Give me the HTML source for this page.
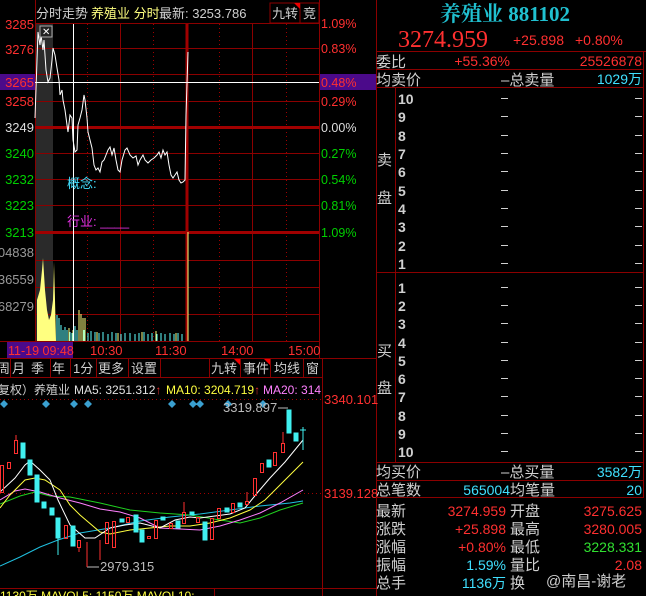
<!DOCTYPE html>
<html><head><meta charset="utf-8"><style>
html,body{margin:0;padding:0;background:#000;width:646px;height:596px;overflow:hidden}
svg{display:block}
text{font-family:"Liberation Sans","Noto Sans CJK SC",sans-serif}
.cn{font-family:"Liberation Sans","WenQuanYi Zen Hei","Noto Sans CJK SC",sans-serif}
</style></head><body>
<svg width="646" height="596" viewBox="0 0 646 596" xmlns="http://www.w3.org/2000/svg">
<rect x="35" y="24" width="18" height="317" fill="#2a2a2a"/>
<g stroke="#8b0000" stroke-width="1">
<line x1="35" y1="23.5" x2="319" y2="23.5"/>
<line x1="35" y1="48.5" x2="319" y2="48.5"/>
<line x1="35" y1="74.5" x2="319" y2="74.5"/>
<line x1="35" y1="101.5" x2="319" y2="101.5"/>
<line x1="35" y1="153.5" x2="319" y2="153.5"/>
<line x1="35" y1="179.5" x2="319" y2="179.5"/>
<line x1="35" y1="205.5" x2="319" y2="205.5"/>
<line x1="35" y1="260.5" x2="319" y2="260.5"/>
<line x1="35" y1="287.5" x2="319" y2="287.5"/>
<line x1="35" y1="314.5" x2="319" y2="314.5"/>
<line x1="0" y1="341.5" x2="319" y2="341.5"/>
<line x1="35.5" y1="0" x2="35.5" y2="341"/>
<line x1="120.5" y1="24" x2="120.5" y2="341"/>
<line x1="252.5" y1="24" x2="252.5" y2="341"/>
<line x1="319.5" y1="0" x2="319.5" y2="358"/>
<line x1="0" y1="358.5" x2="376" y2="358.5"/>
<line x1="376.5" y1="0" x2="376.5" y2="596"/>
</g>
<g stroke="#a00000" stroke-width="3">
<line x1="35" y1="127.5" x2="319" y2="127.5"/>
<line x1="35" y1="232.5" x2="319" y2="232.5"/>
<line x1="187" y1="24" x2="187" y2="341"/>
</g>
<g stroke="#a00000" stroke-width="1" stroke-dasharray="1,3">
<line x1="87.5" y1="24" x2="87.5" y2="341"/>
<line x1="153.5" y1="24" x2="153.5" y2="341"/>
<line x1="219.5" y1="24" x2="219.5" y2="341"/>
<line x1="286.5" y1="24" x2="286.5" y2="341"/>
</g>
<text x="36" y="18" font-size="13" fill="#d0d0d0" class="cn">分时走势</text>
<text x="91" y="18" font-size="13" fill="#ffff80" class="cn">养殖业 分时</text>
<text x="159" y="18" font-size="13" fill="#d0d0d0" class="cn">最新: 3253.786</text>
<rect x="270" y="3" width="30" height="20" fill="none" stroke="#8b0000"/>
<rect x="300" y="3" width="19" height="20" fill="none" stroke="#8b0000"/>
<polygon points="294,3 300,3 300,9" fill="#e00"/>
<text x="272" y="18" font-size="13" fill="#d0d0d0" class="cn">九转</text>
<text x="303" y="18" font-size="13" fill="#d0d0d0" class="cn">竞</text>
<g font-size="13" text-anchor="end">
<text x="34" y="29" fill="#ff3030">3285</text>
<text x="34" y="54" fill="#ff3030">3276</text>
<text x="34" y="106" fill="#ff3030">3258</text>
<text x="34" y="132" fill="#ddd">3249</text>
<text x="34" y="158" fill="#00d000">3240</text>
<text x="34" y="184" fill="#00d000">3232</text>
<text x="34" y="210" fill="#00d000">3223</text>
<text x="34" y="237" fill="#00d000">3213</text>
<text x="34" y="257" fill="#999">04838</text>
<text x="34" y="284" fill="#999">36559</text>
<text x="34" y="311" fill="#999">68279</text>
</g>
<rect x="0" y="74" width="35" height="16" fill="#4b0a8a"/>
<text x="34" y="87" font-size="13" text-anchor="end" fill="#ff3030">3265</text>
<g font-size="12.5">
<text x="321" y="28" fill="#ff3030">1.09%</text>
<text x="321" y="53" fill="#ff3030">0.83%</text>
<text x="321" y="106" fill="#ff3030">0.29%</text>
<text x="321" y="132" fill="#ddd">0.00%</text>
<text x="321" y="158" fill="#00d000">0.27%</text>
<text x="321" y="184" fill="#00d000">0.54%</text>
<text x="321" y="210" fill="#00d000">0.81%</text>
<text x="321" y="237" fill="#00d000">1.09%</text>
</g>
<rect x="320" y="74" width="56" height="16" fill="#4b0a8a"/>
<text x="321" y="87" font-size="12.5" fill="#ff3030">0.48%</text>
<path d="M37,341 L37,300 L40,290 L42,270 L43,258 L45,290 L47,310 L49,320 L51,315 L53,300 L54,262 L55,300 L56,341 Z" fill="#ffff80"/>
<g stroke="#60ffff" stroke-width="1">
<path d="M57,341V315M59,341V318M61,341V325M63,341V330M65,341V327M67,341V330M70,341V332M72,341V333M75,341V326M77,341V330M81,341V329M84,341V330M88,341V333M91,341V331M95,341V332M99,341V333M103,341V332M108,341V334M112,341V332M116,341V333M121,341V334M125,341V333M130,341V333M135,341V334M139,341V333M144,341V332M148,341V334M152,341V333M157,341V334M161,341V333M165,341V334M170,341V333M174,341V334M178,341V333M182,341V334"/>
</g>
<g stroke="#ffff80" stroke-width="1">
<path d="M69,341V328M73,341V330M79,341V310M81,341V314M83,341V318M85,341V318M97,341V332M118,341V333M142,341V332M156,341V331M176,341V333M188,341V232"/>
</g>
<polyline fill="none" stroke="#fff" stroke-width="1" points="35,118 37,60 38,32 40,45 41,35 43,50 44,40 46,70 48,82 50,78 52,60 53,48 55,55 57,68 59,80 60,95 62,90 63,100 65,110 67,125 68,132 70,115 72,118 73,140 75,152 77,150 78,125 80,118 82,110 84,95 85,100 87,118 88,132 90,140 92,148 94,165 96,170 98,168 100,172 102,162 104,160 106,155 108,150 110,147 112,155 114,148 116,160 118,170 120,172 122,160 125,150 127,148 130,155 133,158 136,156 138,165 140,160 143,155 145,160 148,163 151,160 154,158 157,155 159,152 161,158 163,150 165,155 167,152 169,165 171,175 173,178 175,175 177,172 179,180 181,183 183,182 185,180 186,115 188,52"/>
<line x1="35" y1="82.5" x2="319" y2="82.5" stroke="#fff"/>
<line x1="73.5" y1="24" x2="73.5" y2="341" stroke="#fff"/>
<rect x="40" y="26" width="12" height="11" fill="#222" stroke="#aaa"/>
<text x="42" y="35" font-size="10" fill="#fff">✕</text>
<text x="67" y="188" font-size="13" fill="#40e0ff" class="cn">概念:</text>
<text x="67" y="226" font-size="13" fill="#e030e0" class="cn">行业: ____</text>
<rect x="7" y="342" width="66" height="16" fill="#4b0a8a"/>
<text x="8" y="355" font-size="12.5" fill="#ff3030">11-19 09:48</text>
<g font-size="13" fill="#ff3030">
<text x="90" y="355">10:30</text><text x="155" y="355">11:30</text>
<text x="221" y="355">14:00</text><text x="288" y="355">15:00</text>
</g>
<g stroke="#8b0000"><line x1="0" y1="377.5" x2="322" y2="377.5"/>
<path d="M10.5,359V377M50.5,359V377M70.5,359V377M96.5,359V377M128.5,359V377M160.5,359V377M209.5,359V377M240.5,359V377M270.5,359V377M303.5,359V377"/>
<line x1="322.5" y1="359" x2="322.5" y2="596"/>
<line x1="0" y1="588.5" x2="376" y2="588.5"/>
<line x1="214.5" y1="588" x2="214.5" y2="596"/></g>
<polygon points="234,359 240,359 240,365" fill="#e00"/>
<polygon points="264,359 270,359 270,365" fill="#e00"/>
<g font-size="13" fill="#d0d0d0" class="cn">
<text x="-3" y="373">周</text><text x="12" y="373">月</text><text x="31" y="373">季</text><text x="52" y="373">年</text>
<text x="73" y="373">1分</text><text x="98" y="373">更多</text><text x="131" y="373">设置</text>
<text x="211" y="373">九转</text><text x="243" y="373">事件</text><text x="274" y="373">均线</text><text x="306" y="373">窗</text>
</g>
<text x="-2" y="394" font-size="12" class="cn" fill="#d0d0d0">复权）养殖业</text>
<text x="74" y="394" font-size="12" fill="#e0e0e0">MA5: 3251.312<tspan fill="#e03030">↑</tspan></text>
<text x="166" y="394" font-size="12" fill="#ffff40">MA10: 3204.719<tspan fill="#e03030">↑</tspan></text>
<text x="263" y="394" font-size="12" fill="#ff80ff">MA20: 314</text>
<g stroke="#a00000" stroke-dasharray="1,3"><line x1="0" y1="399.5" x2="322" y2="399.5"/><line x1="0" y1="493.5" x2="322" y2="493.5"/></g>
<text x="324" y="404" font-size="13" fill="#ff3030">3340.101</text>
<text x="324" y="498" font-size="13" fill="#ff3030">3139.128</text>
<g fill="#3aa0d0">
<path d="M4,400l4,4l-4,4l-4,-4zM46,400l4,4l-4,4l-4,-4zM74,400l4,4l-4,4l-4,-4zM88,400l4,4l-4,4l-4,-4zM172,400l4,4l-4,4l-4,-4zM193,400l4,4l-4,4l-4,-4zM200,400l4,4l-4,4l-4,-4zM228,400l4,4l-4,4l-4,-4zM263,400l4,4l-4,4l-4,-4z"/>
</g>
<text x="223" y="412" font-size="13" fill="#bbb">3319.897</text>
<line x1="278" y1="408" x2="288" y2="408" stroke="#bbb"/>
<text x="100" y="571" font-size="13" fill="#bbb">2979.315</text>
<line x1="87" y1="567" x2="99" y2="567" stroke="#bbb"/>
<polyline fill="none" stroke="#20c0e0" points="0,566 20,557 40,547 58,540 80,533 110,528 140,521 170,517 200,514 230,510 260,506 290,503 303,501"/>
<polyline fill="none" stroke="#20d020" points="0,504 20,496 35,492 50,496 70,497 100,503 130,510 160,513 190,515 220,520 240,523 260,518 280,510 303,503"/>
<polyline fill="none" stroke="#ff80ff" points="0,500 15,491 25,489 40,492 60,498 80,503 100,509 120,512 140,518 160,528 180,529 200,530 220,526 240,520 260,513 280,503 303,490"/>
<polyline fill="none" stroke="#ffff40" points="0,508 10,495 25,480 35,478 45,480 60,490 70,505 80,515 100,532 110,534 130,530 150,528 170,526 190,526 210,523 230,518 250,510 265,500 280,485 303,462"/>
<polyline fill="none" stroke="#fff" points="0,492 15,478 25,465 30,461 40,470 50,480 58,500 70,525 85,538 95,538 110,528 125,525 140,523 160,528 175,520 190,517 200,518 215,516 230,514 245,508 258,492 270,478 285,462 303,440"/>
<g fill="#40f0f0" stroke="#40f0f0">
<rect x="21" y="443" width="4" height="15"/><rect x="28" y="460" width="4" height="15"/><rect x="35" y="475" width="4" height="27"/>
<rect x="42" y="502" width="4" height="6"/><rect x="50" y="508" width="4" height="7"/><rect x="56" y="518" width="4" height="20"/><line x1="58" y1="538" x2="58" y2="555"/>
<rect x="71" y="526" width="4" height="20"/><rect x="120" y="519" width="4" height="3"/><rect x="134" y="515" width="4" height="17"/>
<rect x="140" y="530" width="4" height="12"/><rect x="161" y="517" width="4" height="3"/><rect x="176" y="521" width="4" height="7"/>
<rect x="190" y="512" width="4" height="3"/><rect x="203" y="522" width="4" height="18"/><rect x="225" y="508" width="4" height="4"/>
<rect x="238" y="503" width="4" height="4"/><rect x="267" y="460" width="4" height="7"/><rect x="287" y="410" width="4" height="23"/>
<rect x="294" y="433" width="4" height="8"/><line x1="303" y1="427" x2="303" y2="450"/><line x1="300" y1="430" x2="306" y2="430"/>
</g>
<g fill="none" stroke="#ff3030">
<rect x="0.5" y="465.5" width="3" height="27"/><rect x="7.5" y="462.5" width="3" height="6"/><rect x="14.5" y="440.5" width="3" height="13"/>
<line x1="16" y1="435" x2="16" y2="440"/>
<rect x="64.5" y="525.5" width="3" height="13"/><rect x="77.5" y="540.5" width="3" height="7"/><line x1="79" y1="547" x2="79" y2="552"/>
<line x1="87" y1="542" x2="87" y2="567"/><line x1="100" y1="540" x2="100" y2="560"/>
<rect x="105.5" y="522.5" width="3" height="21"/><rect x="112.5" y="521.5" width="3" height="26"/><rect x="126.5" y="517.5" width="3" height="5"/>
<rect x="147.5" y="536.5" width="3" height="2"/><rect x="154.5" y="520.5" width="3" height="18"/><rect x="169.5" y="523.5" width="3" height="5"/>
<rect x="182.5" y="512.5" width="3" height="11"/><line x1="184" y1="502" x2="184" y2="512"/><rect x="196.5" y="517.5" width="3" height="5"/>
<rect x="210.5" y="518.5" width="3" height="21"/><rect x="217.5" y="508.5" width="3" height="10"/><rect x="231.5" y="503.5" width="3" height="9"/>
<rect x="245.5" y="501.5" width="3" height="3"/><line x1="247" y1="492" x2="247" y2="501"/><rect x="253.5" y="478.5" width="3" height="17"/>
<rect x="260.5" y="463.5" width="3" height="9"/><rect x="273.5" y="452.5" width="3" height="13"/><rect x="281.5" y="443.5" width="3" height="9"/>
<line x1="283" y1="432" x2="283" y2="443"/>
</g>
<text x="0" y="600" font-size="12" fill="#ffff40">1130万 MAVOL5: 1150万 MAVOL10:</text>
<g stroke="#8b0000">
<line x1="376" y1="51.5" x2="646" y2="51.5"/><line x1="376" y1="69.5" x2="644" y2="69.5"/><line x1="376" y1="87.5" x2="644" y2="87.5"/>
<line x1="376" y1="272.5" x2="644" y2="272.5"/><line x1="376" y1="462.5" x2="644" y2="462.5"/><line x1="376" y1="480.5" x2="644" y2="480.5"/>
<line x1="376" y1="497.5" x2="644" y2="497.5"/><line x1="643.5" y1="51" x2="643.5" y2="497"/><line x1="395.5" y1="88" x2="395.5" y2="462"/>
</g>
<text x="505" y="21" font-size="21" font-weight="bold" fill="#20c0d0" text-anchor="middle" style="font-family:'Liberation Serif','Noto Serif CJK SC',serif">养殖业 881102</text>
<text x="398" y="47" font-size="24" fill="#ff3030" style="font-family:'Liberation Serif',serif">3274.959</text>
<text x="513" y="45" font-size="14" fill="#ff3030">+25.898</text>
<text x="575" y="45" font-size="14" fill="#ff3030">+0.80%</text>
<g font-size="15" fill="#d0d0d0" class="cn">
<text x="376" y="67">委比</text><text x="376" y="85">均卖价</text><text x="501" y="85">–总卖量</text>
<text x="377" y="165">卖</text><text x="377" y="203">盘</text>
<text x="377" y="356">买</text><text x="377" y="393">盘</text>
<text x="376" y="477">均买价</text><text x="501" y="477">–总买量</text>
<text x="376" y="495">总笔数</text><text x="510" y="495">均笔量</text>
<text x="376" y="516">最新</text><text x="510" y="516">开盘</text>
<text x="376" y="534">涨跌</text><text x="510" y="534">最高</text>
<text x="376" y="552">涨幅</text><text x="510" y="552">最低</text>
<text x="376" y="570">振幅</text><text x="510" y="570">量比</text>
<text x="376" y="588">总手</text><text x="510" y="588">换</text>
</g>
<g font-size="14" text-anchor="end">
<text x="510" y="66" fill="#ff3030">+55.36%</text><text x="642" y="66" fill="#ff3030">25526878</text>
<text x="642" y="84" fill="#40e0ff">1029万</text>
<text x="642" y="477" fill="#40e0ff">3582万</text>
<text x="510" y="495" fill="#40e0ff">565004</text><text x="642" y="495" fill="#40e0ff">20</text>
<text x="506" y="516" fill="#ff3030">3274.959</text><text x="642" y="516" fill="#ff3030">3275.625</text>
<text x="506" y="534" fill="#ff3030">+25.898</text><text x="642" y="534" fill="#ff3030">3280.005</text>
<text x="506" y="552" fill="#ff3030">+0.80%</text><text x="642" y="552" fill="#30e030">3228.331</text>
<text x="506" y="570" fill="#40e0ff">1.59%</text><text x="642" y="570" fill="#ff3030">2.08</text>
<text x="506" y="588" fill="#40e0ff">1136万</text>
</g>
<text x="546" y="586" font-size="15" fill="#ccc" class="cn">@南昌-谢老</text>
<g font-size="14" fill="#d0d0d0" font-weight="bold">
<text x="398" y="104">10</text><text x="398" y="122">9</text><text x="398" y="141">8</text><text x="398" y="159">7</text><text x="398" y="177">6</text>
<text x="398" y="196">5</text><text x="398" y="214">4</text><text x="398" y="232">3</text><text x="398" y="251">2</text><text x="398" y="269">1</text>
<text x="398" y="293">1</text><text x="398" y="311">2</text><text x="398" y="329">3</text><text x="398" y="348">4</text><text x="398" y="366">5</text>
<text x="398" y="384">6</text><text x="398" y="402">7</text><text x="398" y="421">8</text><text x="398" y="439">9</text><text x="398" y="457">10</text>
</g>
<g stroke="#d0d0d0">
<path d="M501,98.5h7M635,98.5h7M501,116.5h7M635,116.5h7M501,135.5h7M635,135.5h7M501,153.5h7M635,153.5h7M501,171.5h7M635,171.5h7M501,190.5h7M635,190.5h7M501,208.5h7M635,208.5h7M501,226.5h7M635,226.5h7M501,245.5h7M635,245.5h7M501,263.5h7M635,263.5h7"/>
<path d="M501,287.5h7M635,287.5h7M501,305.5h7M635,305.5h7M501,323.5h7M635,323.5h7M501,342.5h7M635,342.5h7M501,360.5h7M635,360.5h7M501,378.5h7M635,378.5h7M501,396.5h7M635,396.5h7M501,415.5h7M635,415.5h7M501,433.5h7M635,433.5h7M501,451.5h7M635,451.5h7"/>
</g>
</svg>
</body></html>
